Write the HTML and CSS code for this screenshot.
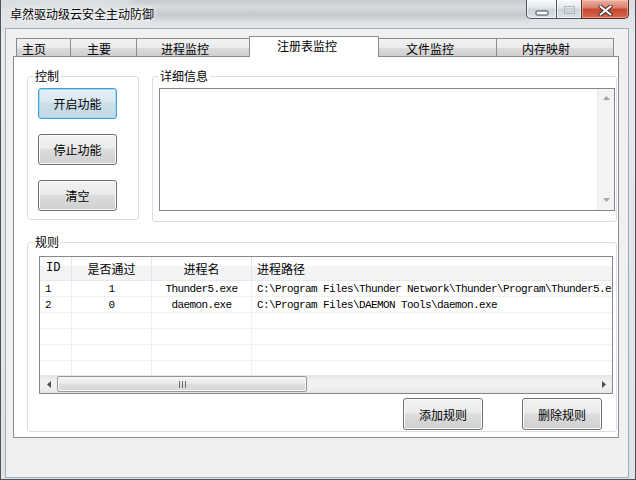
FILE: index.html
```html
<!DOCTYPE html>
<html>
<head>
    <link rel="stylesheet" href="styles.css">
</head>
<body>
    <div class="window">
        <div class="titlebar">
            <div class="glass-blur blur-a"></div>
            <div class="glass-blur blur-b"></div>
            <span class="title">卓然驱动级云安全主动防御</span>
            <div class="caption">
                <div class="cap cap-min">
                    <svg width="14" height="6" viewBox="0 0 14 6"><rect x="1" y="1" width="12" height="4" rx="1" fill="#fff" stroke="#3a414b"/></svg>
                </div>
                <div class="cap cap-max">
                    <svg width="13" height="10" viewBox="0 0 13 10"><rect x="1.5" y="1.5" width="10" height="7" fill="none" stroke="#aeb5bd"/><rect x="3.5" y="3.5" width="6" height="3" fill="none" stroke="#c8ced4"/></svg>
                </div>
                <div class="cap cap-close">
                    <svg width="15" height="11" viewBox="0 0 15 11">
                        <path d="M2.5 1.5 L12.5 9.5 M12.5 1.5 L2.5 9.5" stroke="#3b2a28" stroke-width="4" stroke-linecap="round"/>
                        <path d="M2.5 1.5 L12.5 9.5 M12.5 1.5 L2.5 9.5" stroke="#fff" stroke-width="2.2" stroke-linecap="round"/>
                    </svg>
                </div>
            </div>
        </div>

        <div class="client">
            <div class="tabctl">
                <div class="tabs">
                    <div class="tab">主页</div>
                    <div class="tab">主要</div>
                    <div class="tab">进程监控</div>
                    <div class="tab active">注册表监控</div>
                    <div class="tab">文件监控</div>
                    <div class="tab">内存映射</div>
                </div>
                <div class="panel">
                    <div class="top-row">
                        <fieldset class="grp grp-ctl">
                            <legend>控制</legend>
                            <div class="ctl-btns">
                                <button class="btn default">开启功能</button>
                                <button class="btn">停止功能</button>
                                <button class="btn">清空</button>
                            </div>
                        </fieldset>
                        <fieldset class="grp grp-info">
                            <legend>详细信息</legend>
                            <div class="memo">
                                <div class="memo-body"></div>
                                <div class="vscroll">
                                    <svg width="7" height="4" viewBox="0 0 7 4"><path d="M3.5 0 L7 4 L0 4 Z" fill="#a6a6a6"/></svg>
                                    <svg width="7" height="4" viewBox="0 0 7 4"><path d="M0 0 L7 0 L3.5 4 Z" fill="#a6a6a6"/></svg>
                                </div>
                            </div>
                        </fieldset>
                    </div>

                    <fieldset class="grp grp-rules">
                        <legend>规则</legend>
                        <div class="list">
                            <div class="lv-head">
                                <div class="c1 mono">ID</div>
                                <div class="c2 center">是否通过</div>
                                <div class="c3 center">进程名</div>
                                <div class="c4">进程路径</div>
                            </div>
                            <div class="lv-body">
                                <div class="lv-row mono">
                                    <div class="c1">1</div>
                                    <div class="c2 center">1</div>
                                    <div class="c3 center">Thunder5.exe</div>
                                    <div class="c4">C:\Program Files\Thunder Network\Thunder\Program\Thunder5.exe</div>
                                </div>
                                <div class="lv-row mono">
                                    <div class="c1">2</div>
                                    <div class="c2 center">0</div>
                                    <div class="c3 center">daemon.exe</div>
                                    <div class="c4">C:\Program Files\DAEMON Tools\daemon.exe</div>
                                </div>
                                <div class="lv-row"><div class="c1"></div><div class="c2"></div><div class="c3"></div><div class="c4"></div></div>
                                <div class="lv-row"><div class="c1"></div><div class="c2"></div><div class="c3"></div><div class="c4"></div></div>
                                <div class="lv-row"><div class="c1"></div><div class="c2"></div><div class="c3"></div><div class="c4"></div></div>
                                <div class="lv-row"><div class="c1"></div><div class="c2"></div><div class="c3"></div><div class="c4"></div></div>
                            </div>
                            <div class="hscroll">
                                <div class="sb-arrow">
                                    <svg width="4" height="7" viewBox="0 0 4 7"><path d="M4 0 L4 7 L0 3.5 Z" fill="#4d4d4d"/></svg>
                                </div>
                                <div class="sb-track">
                                    <div class="sb-thumb">
                                        <svg width="7" height="7" viewBox="0 0 7 7"><path d="M0.5 0 V7 M3.5 0 V7 M6.5 0 V7" stroke="#6a6a6a" stroke-width="1"/></svg>
                                    </div>
                                </div>
                                <div class="sb-arrow">
                                    <svg width="4" height="7" viewBox="0 0 4 7"><path d="M0 0 L4 3.5 L0 7 Z" fill="#4d4d4d"/></svg>
                                </div>
                            </div>
                        </div>
                        <div class="rule-btns">
                            <button class="btn wide">添加规则</button>
                            <button class="btn wide">删除规则</button>
                        </div>
                    </fieldset>
                </div>
            </div>
        </div>
    </div>
</body>
</html>
```

FILE: styles.css
```css
* {
    box-sizing: border-box;
}

body {
    margin: 0;
    font-family: "Noto Sans CJK SC", sans-serif;
    font-size: 12px;
    color: #000;
    background: #fff;
}

.window {
    position: relative;
    width: 636px;
    height: 480px;
    overflow: hidden;
    border: 1px solid #4c5258;
    border-top: none;
    background: linear-gradient(to bottom, #dadee3, #e7e9ec 40px, #dfe2e6);
    display: flex;
    flex-direction: column;
}

/* title bar */
.titlebar {
    position: relative;
    height: 28px;
    flex-shrink: 0;
    display: flex;
    align-items: flex-start;
}

.glass-blur {
    position: absolute;
    background: #7f848a;
    opacity: 0.28;
    filter: blur(3px);
}

.blur-a {
    left: 150px;
    top: 10px;
    width: 380px;
    height: 9px;
}

.blur-b {
    left: 130px;
    top: -4px;
    width: 400px;
    height: 7px;
}

.title {
    position: relative;
    margin: 6px 0 0 9px;
    line-height: 16px;
    text-shadow: 0 0 6px #fff, 0 0 3px #fff;
}

.caption {
    position: relative;
    margin-left: auto;
    margin-right: 6px;
    display: flex;
}

.cap {
    height: 19px;
    border: 1px solid #4b535c;
    border-top: none;
    background: linear-gradient(#f6f8fa, #e4e9ee 45%, #ccd3db 50%, #dbe1e7);
    box-shadow: inset 0 0 0 1px rgba(255, 255, 255, 0.6);
    display: flex;
    justify-content: center;
}

.cap-min {
    width: 31px;
    border-radius: 0 0 0 5px;
    padding-top: 10px;
}

.cap-max {
    width: 26px;
    margin-left: -1px;
    padding-top: 5px;
}

.cap-close {
    width: 48px;
    margin-left: -1px;
    border-color: #5a2a24;
    border-radius: 0 0 5px 0;
    padding-top: 5px;
    background: linear-gradient(#eab1a4, #d97d69 45%, #c5472f 50%, #d5684e);
    box-shadow: inset 0 0 0 1px rgba(255, 210, 200, 0.5);
}

/* client area */
.client {
    flex: 1;
    margin: 0 6px 1px 4px;
    background: #f0f0f0;
    border: 1px solid #a4aab1;
    padding: 7px 9px 0 7px;
}

.tabs {
    display: flex;
    align-items: flex-end;
    height: 20px;
    padding-left: 3px;
}

.tab {
    height: 18px;
    margin-left: -1px;
    border: 1px solid #898c95;
    border-bottom: none;
    background: linear-gradient(#f2f2f2, #ebebeb 50%, #dddddd 50%, #cfcfcf);
    padding-top: 2px;
    line-height: 15px;
    white-space: nowrap;
}

.tab:first-child {
    margin-left: 0;
}

.tab:nth-child(1) { width: 55px; padding-left: 5px; }
.tab:nth-child(2) { width: 67px; padding-left: 16px; }
.tab:nth-child(3) { width: 114px; padding-left: 24px; }
.tab:nth-child(4) { width: 130px; padding-left: 27px; }
.tab:nth-child(5) { width: 119px; padding-left: 27px; }
.tab:nth-child(6) { width: 118px; padding-left: 25px; }

.tab.active {
    position: relative;
    z-index: 1;
    height: 21px;
    margin-bottom: -1px;
    background: #fff;
    padding-top: 1px;
}

.panel {
    height: 382px;
    border: 1px solid #898c95;
    background: #fff;
    padding: 13px 0 0 13px;
}

/* group boxes */
.top-row {
    display: flex;
    align-items: flex-start;
    gap: 13px;
}

.grp {
    margin: 0;
    padding: 0;
    min-width: 0;
    border: 1px solid #d5dfe5;
    border-radius: 3px;
}

.grp legend {
    margin-left: 5px;
    padding: 0 2px;
    line-height: 12px;
    font-size: 12px;
}

.grp-ctl {
    width: 112px;
    height: 150px;
}

.ctl-btns {
    display: flex;
    flex-direction: column;
    gap: 15px;
    padding: 6px 0 0 10px;
}

.grp-info {
    width: 465px;
    height: 152px;
}

.memo {
    margin: 6px 0 0 6px;
    width: 456px;
    height: 123px;
    border: 1px solid #828790;
    background: #fff;
    display: flex;
}

.memo-body {
    flex: 1;
}

.vscroll {
    width: 17px;
    background: #f3f3f3;
    border-left: 1px solid #e8e8e8;
    display: flex;
    flex-direction: column;
    justify-content: space-between;
    align-items: center;
    padding: 7px 0 8px;
}

.grp-rules {
    width: 590px;
    height: 196px;
    margin-top: 14px;
}

/* buttons */
.btn {
    width: 79px;
    height: 31px;
    padding: 0;
    border: 1px solid #707070;
    border-radius: 3px;
    background: linear-gradient(#f2f2f2, #ebebeb 45%, #dddddd 50%, #cfcfcf);
    box-shadow: inset 0 0 0 1px #fbfbfb;
    font-family: "Noto Sans CJK SC", sans-serif;
    font-size: 12px;
    color: #000;
}

.btn.default {
    border-color: #3ca2dc;
    box-shadow: inset 0 0 0 1px #a6d9f2;
    background: linear-gradient(#e5f0f6, #dae8f0 45%, #cadee9 50%, #c3d9e5);
}

.btn.wide {
    width: 80px;
    height: 32px;
}

.rule-btns {
    display: flex;
    justify-content: flex-end;
    gap: 39px;
    margin-top: 4px;
    padding-right: 14px;
}

/* list view */
.list {
    margin: 8px 0 0 11px;
    width: 574px;
    height: 138px;
    border: 1px solid #828790;
    display: flex;
    flex-direction: column;
    overflow: hidden;
}

.mono {
    font-family: "Liberation Mono", monospace;
    font-size: 11px;
    letter-spacing: -0.6px;
}

.lv-head {
    display: flex;
    height: 24px;
    flex-shrink: 0;
    border-bottom: 1px solid #e8e8e8;
    background: linear-gradient(#fff 0, #fff 40%, #f3f4f6 40%, #f3f4f6);
    line-height: 23px;
}

.lv-head > div {
    border-right: 1px solid #e3e5e9;
}

.lv-body {
    flex: 1;
    overflow: hidden;
}

.lv-row {
    display: flex;
    height: 16px;
    border-bottom: 1px solid #f0f0f0;
    line-height: 16px;
}

.lv-row > div {
    border-right: 1px solid #f0f0f0;
}

.c1 {
    flex: 0 0 32px;
    padding-left: 5px;
}

.c2 {
    flex: 0 0 80px;
}

.c3 {
    flex: 0 0 100px;
}

.c4 {
    flex: 0 0 420px;
    padding-left: 5px;
    white-space: nowrap;
}

.lv-head .c1 {
    font-size: 12px;
    letter-spacing: 0;
    padding-left: 6px;
}

.center {
    text-align: center;
}

.hscroll {
    height: 18px;
    flex-shrink: 0;
    display: flex;
    background: linear-gradient(#e4e4e4, #f1f1f1 35%, #f1f1f1 65%, #e6e6e6);
}

.sb-arrow {
    width: 17px;
    display: flex;
    align-items: center;
    justify-content: center;
}

.sb-track {
    flex: 1;
    padding: 1px 0;
}

.sb-thumb {
    width: 250px;
    height: 16px;
    border: 1px solid #979797;
    border-radius: 2px;
    background: linear-gradient(#f4f4f4, #ececec 45%, #dfdfdf 50%, #d6d6d6);
    box-shadow: inset 0 0 0 1px #fafafa;
    display: flex;
    align-items: center;
    justify-content: center;
}
```
